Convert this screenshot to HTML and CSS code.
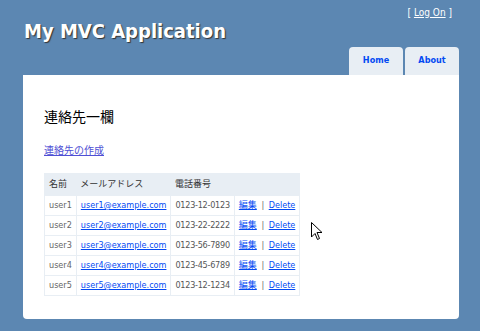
FILE: index.html
```html
<!DOCTYPE html>
<html lang="ja">
<head>
  <meta charset="UTF-8">
  <title>連絡先一欄</title>
  <link rel="stylesheet" href="styles.css">
</head>
<body>
  <div class="page">
    <div class="header">
      <div class="title">My MVC Application</div>
      <div class="logindisplay">[ <a href="#">Log On</a> ]</div>
      <ul class="menu">
        <li><a href="#">Home</a></li>
        <li><a href="#">About</a></li>
      </ul>
    </div>

    <div class="main">
      <h2>連絡先一欄</h2>
      <p><a class="create" href="#">連絡先の作成</a></p>

      <table>
        <tr>
          <th>名前</th>
          <th>メールアドレス</th>
          <th>電話番号</th>
          <th></th>
        </tr>
        <tr>
          <td class="name">user1</td>
          <td><a href="#">user1@example.com</a></td>
          <td class="phone">0123-12-0123</td>
          <td><a href="#">編集</a> <span class="sep">|</span> <a href="#">Delete</a></td>
        </tr>
        <tr>
          <td class="name">user2</td>
          <td><a href="#">user2@example.com</a></td>
          <td class="phone">0123-22-2222</td>
          <td><a href="#">編集</a> <span class="sep">|</span> <a href="#">Delete</a></td>
        </tr>
        <tr>
          <td class="name">user3</td>
          <td><a href="#">user3@example.com</a></td>
          <td class="phone">0123-56-7890</td>
          <td><a href="#">編集</a> <span class="sep">|</span> <a href="#">Delete</a></td>
        </tr>
        <tr>
          <td class="name">user4</td>
          <td><a href="#">user4@example.com</a></td>
          <td class="phone">0123-45-6789</td>
          <td><a href="#">編集</a> <span class="sep">|</span> <a href="#">Delete</a></td>
        </tr>
        <tr>
          <td class="name">user5</td>
          <td><a href="#">user5@example.com</a></td>
          <td class="phone">0123-12-1234</td>
          <td><a href="#">編集</a> <span class="sep">|</span> <a href="#">Delete</a></td>
        </tr>
      </table>
    </div>
  </div>

  <!-- mouse pointer seen in the screenshot -->
  <svg class="cursor" width="12" height="19" viewBox="0 0 12 19">
    <path d="M0.5 0.5 L0.5 15 L4 11.5 L6.5 17.5 L8.5 16.5 L6 10.5 L11 10.5 Z" fill="#fff" stroke="#000" stroke-width="1"/>
  </svg>
</body>
</html>
```

FILE: styles.css
```css
body {
  background-color: #5c87b2;
  font-family: "DejaVu Sans Condensed", "DejaVu Sans", "Noto Sans CJK JP", sans-serif;
  font-size: 9px;
  color: #000;
  margin: 0;
}

a {
  color: #034af3;
}

.page {
  width: 436px;
  margin-left: 23px;
}

.header {
  position: relative;
  height: 75px;
}

.title {
  padding-top: 19px;
  padding-left: 1px;
  font-weight: bold;
  font-size: 20px;
  color: #fff;
  text-shadow: 1px 1px 1px #333;
}

.logindisplay {
  position: absolute;
  top: 7px;
  right: 7px;
  color: #fff;
  font-size: 10px;
}

.logindisplay a {
  color: #fff;
}

.menu {
  position: absolute;
  right: 0;
  bottom: 0;
  display: flex;
  gap: 2px;
  list-style: none;
  margin: 0;
  padding: 0;
}

.menu li a {
  display: block;
  width: 54px;
  height: 28px;
  line-height: 26px;
  text-align: center;
  background-color: #e8eef4;
  border-radius: 4px 4px 0 0;
  color: #034af3;
  font-weight: bold;
  font-size: 9px;
  text-decoration: none;
}

.main {
  background-color: #fff;
  padding: 31px 21px 23px;
  border-radius: 0 0 4px 4px;
}

h2 {
  font-family: "Noto Sans CJK JP", sans-serif;
  font-size: 14px;
  font-weight: normal;
  line-height: 20px;
  margin: 0 0 18px;
}

p {
  font-size: 10px;
  line-height: 14px;
  margin: 0 0 15px;
}

.create {
  color: #4f4fd4;
}

table {
  border-collapse: collapse;
  border: 1px solid #e8eef4;
}

th {
  background-color: #e8eef4;
  text-align: left;
  font-weight: normal;
  line-height: 11px;
  padding: 5px 4px;
  color: #333;
}

td {
  border: 1px solid #e8eef4;
  line-height: 11px;
  padding: 4px 4px;
  color: #555;
  white-space: nowrap;
}

td.name {
  color: #666;
}

td.phone {
  letter-spacing: -0.25px;
}

.sep {
  color: #666;
  margin: 0 2px;
}

.cursor {
  position: absolute;
  left: 311px;
  top: 222px;
}
```
